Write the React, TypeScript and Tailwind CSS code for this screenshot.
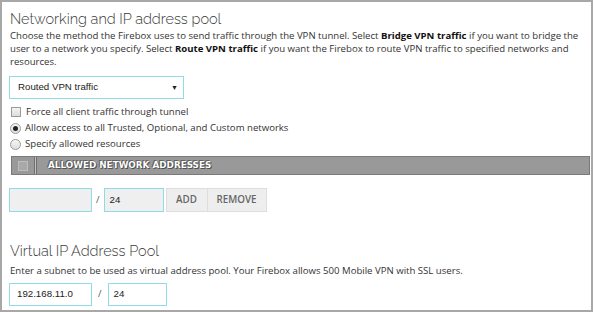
import React from "react"

function Checkbox({ className = "" }: { className?: string }) {
  return (
    <span
      className={`inline-block w-[10px] h-[10px] border border-[#9a9a9a] bg-gradient-to-b from-[#f4f4f4] to-[#dcdcdc] ${className}`}
    />
  )
}

function Radio({ checked }: { checked?: boolean }) {
  return (
    <span className="w-[11px] h-[11px] rounded-full border border-[#9a9a9a] bg-gradient-to-b from-[#f6f6f6] to-[#dedede] flex items-center justify-center">
      {checked && <span className="w-[5px] h-[5px] rounded-full bg-[#222]" />}
    </span>
  )
}

const body = "font-['Open_Sans',sans-serif] text-[9.6px] text-[#333]"
const field = "font-['Liberation_Sans',sans-serif] text-[9.7px] text-[#222]"

export default function App() {
  return (
    <div className="w-[593px] h-[312px] border-2 border-[#a8a8a8] bg-white overflow-hidden">
      <div className="pl-[7px] pr-[3px] pt-[7px]">
        {/* Networking section */}
        <h2 className="pl-px font-['Raleway','Lato',sans-serif] font-light text-[14.5px] leading-[20px] text-[#3a3a3a]">
          Networking and IP address pool
        </h2>
        <p className={`${body} leading-[13px] pl-px`}>
          Choose the method the Firebox uses to send traffic through the VPN tunnel. Select{" "}
          <b className="font-bold text-[#111]">Bridge VPN traffic</b> if you want to bridge the user to a network you specify. Select{" "}
          <b className="font-bold text-[#111]">Route VPN traffic</b> if you want the Firebox to route VPN traffic to specified networks and
          resources.
        </p>

        <div className={`mt-[8px] w-[175px] h-[23px] border border-[#8fdbe8] flex items-center justify-between pl-[8px] pr-[5px] ${field}`}>
          <span>Routed VPN traffic</span>
          <span className="text-[7px] leading-none">▼</span>
        </div>

        <div className={`${body} mt-[5px] pl-px flex flex-col`}>
          <label className="flex items-center gap-[5px] h-[16px]">
            <Checkbox className="ml-px" />
            <span>Force all client traffic through tunnel</span>
          </label>
          <label className="flex items-center gap-[4px] h-[16px]">
            <Radio checked />
            <span>Allow access to all Trusted, Optional, and Custom networks</span>
          </label>
          <label className="flex items-center gap-[4px] h-[16px]">
            <Radio />
            <span>Specify allowed resources</span>
          </label>
        </div>

        {/* Allowed network addresses table header */}
        <div className="mt-[4px] ml-[2px] w-[579px] h-[19px] bg-[#999] border border-[#7a7a7a] flex">
          <div className="w-[23px] flex items-center justify-center border-r border-[#6e6e6e]">
            <span className="w-[10px] h-[10px] bg-[#a9a9a9] border border-[#bdbdbd]" />
          </div>
          <div className="w-[1px] bg-[#c4c4c4]" />
          <div className="flex-1 flex items-center pl-[11px] border-l border-[#6e6e6e] font-['DejaVu_Sans',sans-serif] font-bold text-[8.8px] text-white [text-shadow:0_0_1px_#333,1px_1px_0_#555,-1px_-1px_0_#666]">
            ALLOWED NETWORK ADDRESSES
          </div>
        </div>

        <div className="mt-[13px] flex items-center">
          <div className="w-[83px] h-[24px] border border-[#8fdbe8] bg-[#efefef]" />
          <span className={`${body} mx-[4px] text-[#555]`}>/</span>
          <div className={`w-[60px] h-[24px] border border-[#8fdbe8] bg-[#efefef] flex items-center pl-[5px] ${field}`}>
            24
          </div>
          <div className="ml-[2px] flex font-['Open_Sans',sans-serif] font-semibold text-[9.8px] text-[#666]">
            <button className="w-[42px] h-[24px] bg-[#eee] border border-[#ddd]">ADD</button>
            <button className="w-[59px] h-[24px] bg-[#eee] border border-[#ddd] border-l-0">REMOVE</button>
          </div>
        </div>

        {/* Virtual IP pool */}
        <h2 className="mt-[29px] pl-px font-['Raleway','Lato',sans-serif] font-light text-[14.5px] leading-[20px] text-[#3a3a3a]">
          Virtual IP Address Pool
        </h2>
        <p className={`${body} leading-[13px] mt-[3px] pl-px`}>
          Enter a subnet to be used as virtual address pool. Your Firebox allows 500 Mobile VPN with SSL users.
        </p>
        <div className="mt-[6px] flex items-center">
          <div className={`w-[83px] h-[23px] border border-[#8fdbe8] flex items-center pl-[7px] ${field}`}>
            192.168.11.0
          </div>
          <span className={`${body} mx-[6px] text-[#555]`}>/</span>
          <div className={`w-[59px] h-[23px] border border-[#8fdbe8] flex items-center pl-[5px] ${field}`}>
            24
          </div>
        </div>
      </div>
    </div>
  )
}
